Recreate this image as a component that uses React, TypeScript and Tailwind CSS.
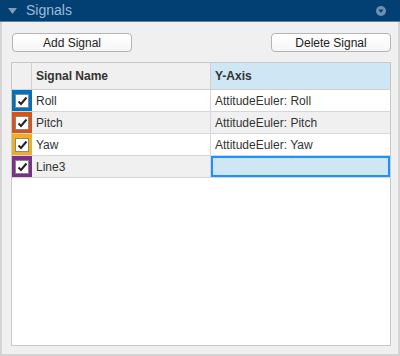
import React from "react";

const rows = [
  { name: "Roll", axis: "AttitudeEuler: Roll", color: "bg-[#0072bd]", bg: "bg-white" },
  { name: "Pitch", axis: "AttitudeEuler: Pitch", color: "bg-[#d95319]", bg: "bg-[#f0f0f0]" },
  { name: "Yaw", axis: "AttitudeEuler: Yaw", color: "bg-[#edb120]", bg: "bg-white" },
  { name: "Line3", axis: "", color: "bg-[#7e2f8e]", bg: "bg-[#f0f0f0]", selected: true },
];

function Check() {
  return (
    <div className="w-[14px] h-[14px] bg-white border border-[#888] flex items-center justify-center">
      <svg width="11" height="10" viewBox="0 0 11 10">
        <path d="M1.5 5.5 L4 8 L9.5 1.5" fill="none" stroke="#222" strokeWidth="2" />
      </svg>
    </div>
  );
}

export default function App() {
  return (
    <div className="w-[400px] h-[356px] bg-[#f0f0f0] flex flex-col text-[12px] text-[#333]" style={{ fontFamily: '"Liberation Sans", Arial, sans-serif' }}>
      <div className="h-[22px] bg-[#023f73] flex items-center px-[8px] border-b border-[#5b7fa3]">
        <svg width="9" height="6" viewBox="0 0 9 6" className="mr-[9px]">
          <path d="M0 0 L9 0 L4.5 6 Z" fill="#7e9ebd" />
        </svg>
        <span className="text-[14px] text-[#9fbbd6] flex-1">Signals</span>
        <svg width="10" height="10" viewBox="0 0 10 10" className="mr-[6px]">
          <circle cx="5" cy="5" r="5" fill="#6f8fb0" />
          <path d="M2.5 3.5 L7.5 3.5 L5 7 Z" fill="#023f73" />
        </svg>
      </div>
      <div className="flex-1 border-l-2 border-r-2 border-b-2 border-[#d4d4d4] flex flex-col pl-[9px] pr-[7px] pt-[11px] pb-[8px]">
        <div className="flex justify-between pl-[1px]">
          <button className="w-[120px] h-[19px] bg-gradient-to-b from-white to-[#f6f6f6] border border-[#b4b4b4] rounded-[4px] text-[12px] text-[#222]">Add Signal</button>
          <button className="w-[120px] h-[19px] bg-gradient-to-b from-white to-[#f6f6f6] border border-[#b4b4b4] rounded-[4px] text-[12px] text-[#222]">Delete Signal</button>
        </div>
        <div className="mt-[10px] flex-1 bg-white border border-[#c8c8c8] flex flex-col">
          <div className="flex h-[27px] bg-[#f0f0f0] border-b border-[#d0d0d0]">
            <div className="w-[20px] border-r border-[#d0d0d0]" />
            <div className="w-[179px] border-r border-[#d0d0d0] flex items-center pl-[4px] font-bold">Signal Name</div>
            <div className="flex-1 bg-[#cfe6f5] flex items-center pl-[4px] font-bold">Y-Axis</div>
          </div>
          {rows.map((r) => (
            <div key={r.name} className={`flex h-[22px] border-b border-[#d6d6d6] ${r.bg}`}>
              <div className={`w-[20px] ${r.color} flex items-center justify-center`}>
                <Check />
              </div>
              <div className="w-[179px] border-r border-[#d6d6d6] flex items-center pl-[4px]">{r.name}</div>
              {r.selected ? (
                <div className="flex-1 bg-[#cfe6f5] border-2 border-[#1e90ff]" />
              ) : (
                <div className="flex-1 flex items-center pl-[4px]">{r.axis}</div>
              )}
            </div>
          ))}
        </div>
      </div>
    </div>
  );
}
